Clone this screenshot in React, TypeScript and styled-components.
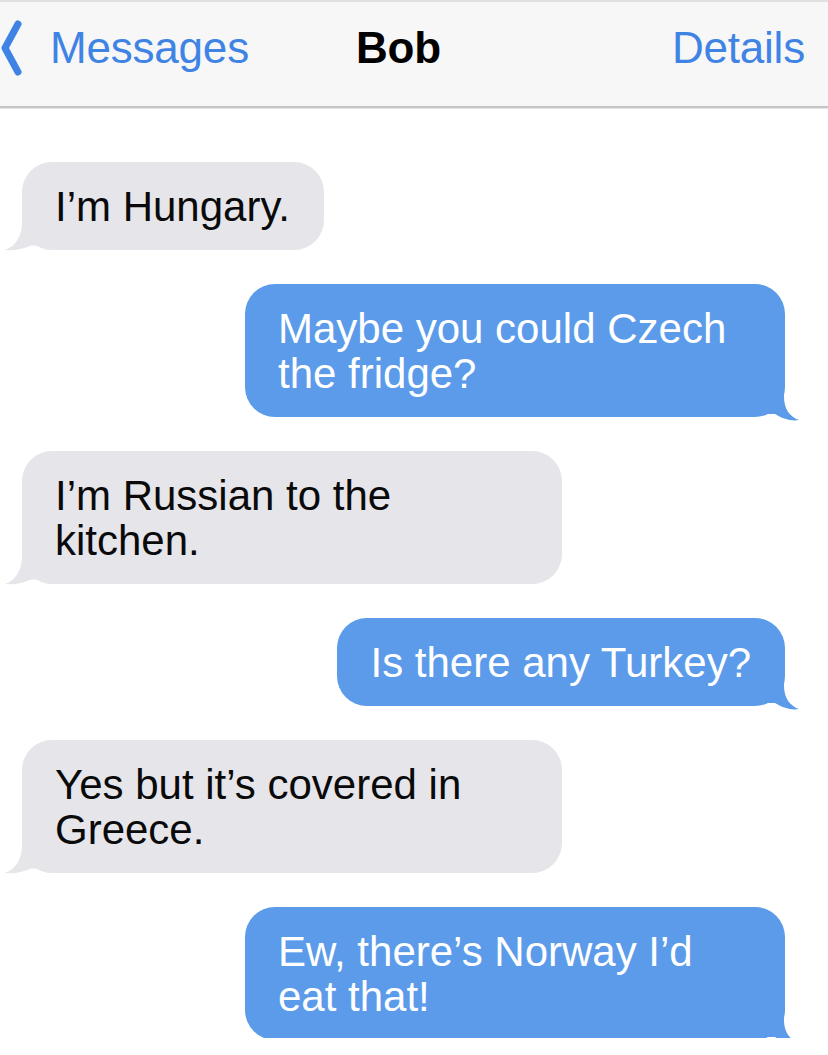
import React from "react";
import styled, { createGlobalStyle } from "styled-components";

const GlobalStyle = createGlobalStyle`
  html, body {
    margin: 0;
    padding: 0;
    background: #ffffff;
  }
  body {
    font-family: "Liberation Sans", Arial, Helvetica, sans-serif;
  }
`;

const Screen = styled.div`
  width: 828px;
  height: 1038px;
  overflow: hidden;
  background: #ffffff;
  display: flex;
  flex-direction: column;
`;

const NavBar = styled.header`
  box-sizing: border-box;
  height: 108px;
  flex: 0 0 auto;
  display: flex;
  align-items: center;
  padding: 0 23px 12px 0;
  background: #f7f7f7;
  border-top: 2px solid #e0e0e0;
  border-bottom: 2px solid #c4c4c4;
  box-shadow: 0 1px 0 #e6e6e6;
  font-size: 44px;
  letter-spacing: -0.2px;
`;

const BackButton = styled.div`
  display: flex;
  align-items: center;
  gap: 28px;
  color: #3f84e4;
`;

const Title = styled.div`
  margin-left: 107px;
  font-weight: 700;
  color: #000000;
`;

const NavAction = styled.div`
  margin-left: auto;
  color: #3f84e4;
`;

const Thread = styled.main`
  display: flex;
  flex-direction: column;
  gap: 34px;
  padding: 54px 43px 0 22px;
`;

const Row = styled.div<{ $outgoing: boolean }>`
  display: flex;
  justify-content: ${(p) => (p.$outgoing ? "flex-end" : "flex-start")};
`;

const Bubble = styled.div<{ $outgoing: boolean }>`
  position: relative;
  box-sizing: border-box;
  max-width: 540px;
  padding: 21.5px 34px 21.5px 33px;
  border-radius: 30px;
  font-size: 42px;
  line-height: 45px;
  background: ${(p) => (p.$outgoing ? "#5b9bea" : "#e5e5ea")};
  color: ${(p) => (p.$outgoing ? "#ffffff" : "#0a0a0a")};
`;

const TailSvg = styled.svg<{ $outgoing: boolean }>`
  position: absolute;
  width: 46px;
  height: 44px;
  bottom: ${(p) => (p.$outgoing ? "-4px" : "0px")};
  ${(p) => (p.$outgoing ? "right: -15px;" : "left: -17px; transform: scaleX(-1);")}
  overflow: visible;
`;

const Tail: React.FC<{ outgoing: boolean }> = ({ outgoing }) => (
  <TailSvg $outgoing={outgoing} viewBox="0 0 46 44" aria-hidden="true">
    <path
      d={
        outgoing
          ? "M30 0 L30 20 C30 32 36 40 45 43 C37 44.5 28 41.5 21 37 L13 37 L13 0 Z"
          : "M29 0 L29 16 C29 30 35 40 46 44 C37 45 28 43 20 39.5 L12 39.5 L12 0 Z"
      }
      fill={outgoing ? "#5b9bea" : "#e5e5ea"}
    />
  </TailSvg>
);

const Chevron = () => (
  <svg width="22" height="56" viewBox="0 0 22 56" aria-hidden="true">
    <polyline
      points="18,4 5,28 18,52"
      fill="none"
      stroke="#3f84e4"
      strokeWidth="7"
      strokeLinecap="round"
      strokeLinejoin="round"
    />
  </svg>
);

type Message = { text: React.ReactNode; outgoing: boolean };

const messages: Message[] = [
  { text: "I’m Hungary.", outgoing: false },
  { text: "Maybe you could Czech the fridge?", outgoing: true },
  { text: "I’m Russian to the kitchen.", outgoing: false },
  { text: "Is there any Turkey?", outgoing: true },
  { text: "Yes but it’s covered in Greece.", outgoing: false },
  { text: "Ew, there’s Norway I’d eat that!", outgoing: true },
];

export default function App() {
  return (
    <>
      <GlobalStyle />
      <Screen>
        <NavBar>
          <BackButton>
            <Chevron />
            <span>Messages</span>
          </BackButton>
          <Title>Bob</Title>
          <NavAction>Details</NavAction>
        </NavBar>
        <Thread>
          {messages.map((m, i) => (
            <Row key={i} $outgoing={m.outgoing}>
              <Bubble $outgoing={m.outgoing}>
                {m.text}
                <Tail outgoing={m.outgoing} />
              </Bubble>
            </Row>
          ))}
        </Thread>
      </Screen>
    </>
  );
}
